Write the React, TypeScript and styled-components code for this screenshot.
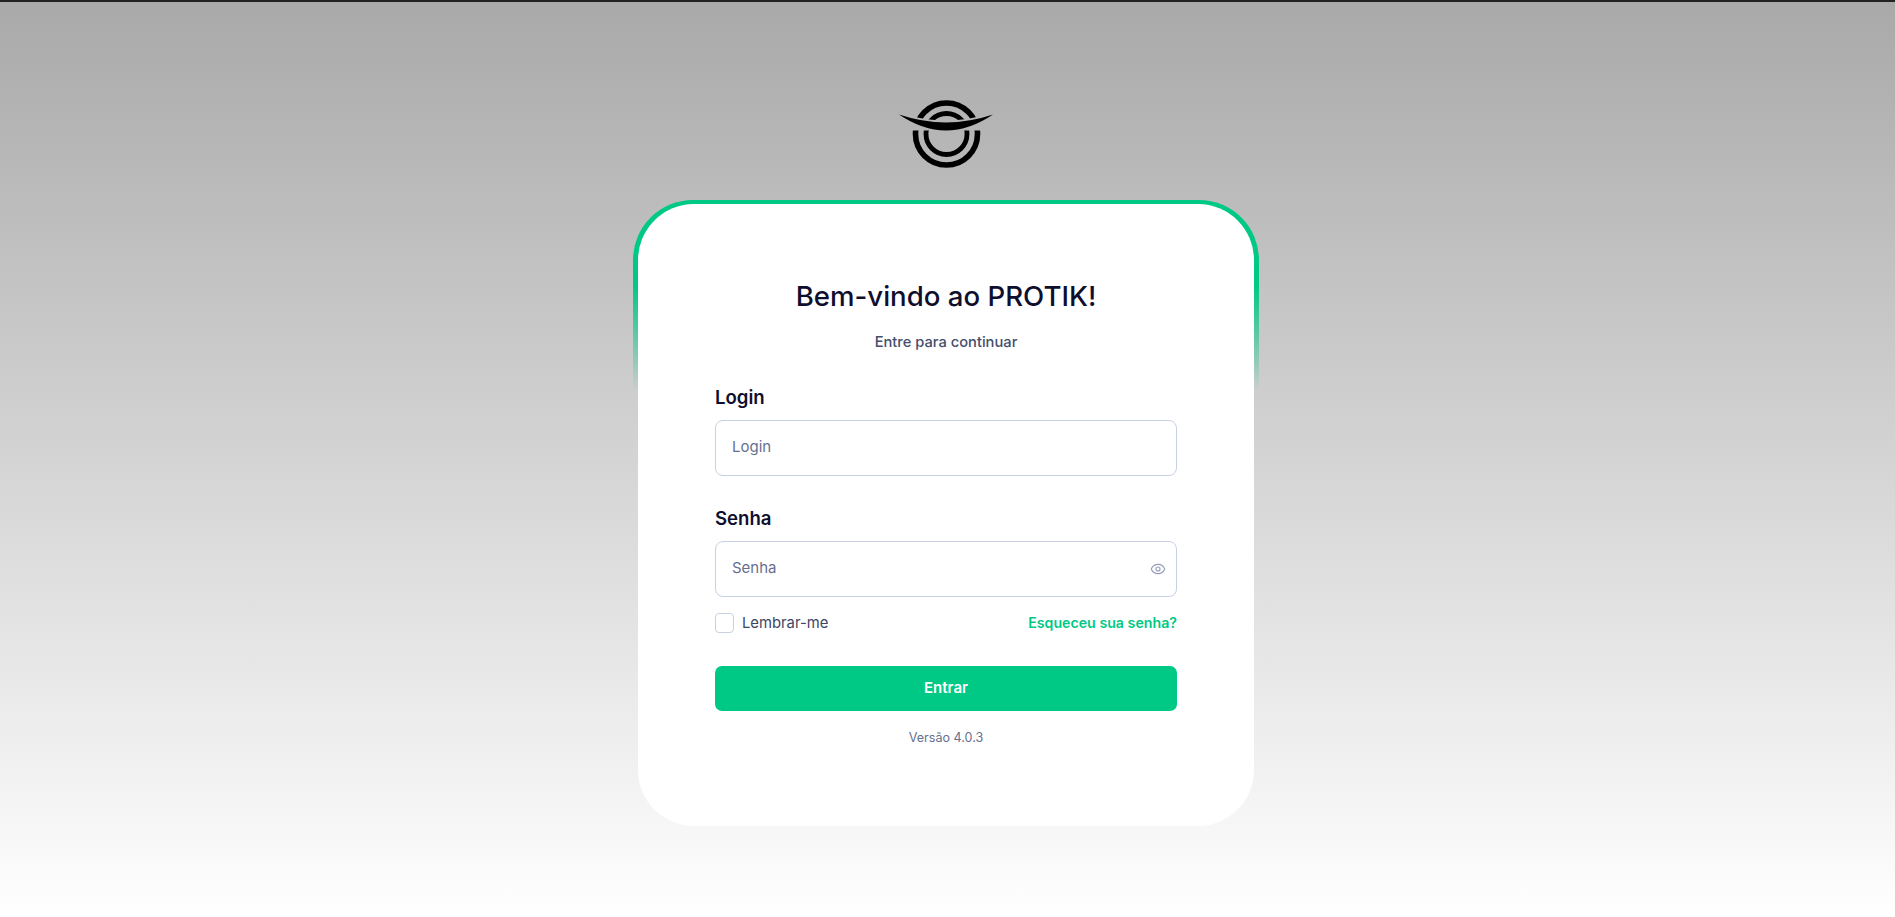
import React from "react";
import styled, { createGlobalStyle } from "styled-components";
import { Eye } from "lucide-react";

const Global = createGlobalStyle`
  html, body { margin: 0; padding: 0; height: 100%; }
  body { font-family: "Inter", "Liberation Sans", sans-serif; }
  * { box-sizing: border-box; }
`;

const Page = styled.main`
  height: 917px;
  overflow: hidden;
  display: flex;
  flex-direction: column;
  align-items: center;
  padding: 98px 3px 0 0;
  border-top: 2px solid #222;
  background: linear-gradient(180deg, #a9a9a9 0%, #ffffff 100%);
`;

const Logo = styled.svg`
  display: block;
  width: 92px;
  height: 68px;
  flex: none;
  overflow: visible;
`;

const CardFrame = styled.div`
  position: relative;
  margin-top: 32px;
  padding: 4px 5px 0;
  width: 626px;
  &::before {
    content: "";
    position: absolute;
    top: 0;
    left: 0;
    right: 0;
    height: 190px;
    border-radius: 60px 60px 0 0;
    background: linear-gradient(180deg, #00c985 0%, #00c985 45%, rgba(0, 201, 133, 0) 100%);
  }
`;

const Card = styled.section`
  position: relative;
  width: 616px;
  height: 622px;
  background: #fff;
  border-radius: 56px;
  padding: 75px 77px 0;
  display: flex;
  flex-direction: column;
`;

const Title = styled.h1`
  margin: 0;
  text-align: center;
  font-size: 27.6px;
  line-height: 34px;
  font-weight: 500;
  color: #0f0f2d;
`;

const Subtitle = styled.p`
  margin: 19px 0 0;
  text-align: center;
  font-size: 14.7px;
  line-height: 20px;
  font-weight: 500;
  color: #454e6c;
`;

const Field = styled.div<{ $top: number }>`
  margin-top: ${(p) => p.$top}px;
  display: flex;
  flex-direction: column;
  gap: 11px;
`;

const Label = styled.label`
  font-size: 18.6px;
  line-height: 24px;
  font-weight: 600;
  color: #0f0f2d;
`;

const InputBox = styled.div`
  position: relative;
  height: 56px;
`;

const Input = styled.input`
  width: 100%;
  height: 100%;
  border: 1px solid #c9d0e3;
  border-radius: 8px;
  padding: 0 16px 3px;
  background: #fff;
  font: 400 15px "Inter", "Liberation Sans", sans-serif;
  color: #0f0f2d;
  outline: none;
  &::placeholder { color: #667091; opacity: 1; }
`;

const EyeButton = styled.span`
  position: absolute;
  top: 50%;
  right: 11px;
  transform: translateY(-50%);
  display: flex;
  color: #949db8;
`;

const OptionsRow = styled.div`
  margin-top: 16px;
  display: flex;
  align-items: center;
  justify-content: space-between;
  height: 20px;
`;

const Remember = styled.label`
  display: flex;
  align-items: center;
  gap: 8px;
  font-size: 14.8px;
  line-height: 20px;
  font-weight: 400;
  color: #3d4664;
`;

const CheckBox = styled.span`
  width: 19px;
  height: 20px;
  border: 1px solid #c9d0e3;
  border-radius: 4px;
  background: #fff;
`;

const ForgotLink = styled.a`
  font-size: 14.2px;
  line-height: 20px;
  font-weight: 600;
  color: #00c985;
  text-decoration: none;
`;

const Submit = styled.button`
  margin-top: 33px;
  height: 45px;
  width: 100%;
  padding: 0 0 2px;
  border: 0;
  border-radius: 7px;
  background: #00c985;
  color: #fff;
  font: 600 15px "Inter", "Liberation Sans", sans-serif;
`;

const Version = styled.p`
  margin: 17px 0 0;
  text-align: center;
  font-size: 12.6px;
  line-height: 20px;
  color: #667091;
`;

export default function App() {
  return (
    <Page>
      <Global />
      <Logo viewBox="0 0 92 68" aria-label="PROTIK">
        <defs>
          <clipPath id="logo-top">
            <path d="M0 0H92V13Q46 28 0 13Z" />
          </clipPath>
          <clipPath id="logo-bottom">
            <rect x="0" y="30.5" width="92" height="38" />
          </clipPath>
        </defs>
        <g fill="none" stroke="#000">
          <g clipPath="url(#logo-top)">
            <circle cx="46.5" cy="34" r="31" strokeWidth="5.6" />
            <circle cx="46.5" cy="34" r="20.5" strokeWidth="4.8" />
          </g>
          <g clipPath="url(#logo-bottom)">
            <circle cx="46.5" cy="34" r="31" strokeWidth="5.6" />
            <circle cx="46.5" cy="34" r="20.5" strokeWidth="4.8" />
          </g>
        </g>
        <path d="M-1 14.5Q46 30.4 93 14.5Q46 46.4 -1 14.5Z" fill="#000" />
      </Logo>
      <CardFrame>
        <Card>
          <Title>Bem-vindo ao PROTIK!</Title>
          <Subtitle>Entre para continuar</Subtitle>
          <Field $top={33}>
            <Label>Login</Label>
            <InputBox>
              <Input placeholder="Login" />
            </InputBox>
          </Field>
          <Field $top={30}>
            <Label>Senha</Label>
            <InputBox>
              <Input placeholder="Senha" />
              <EyeButton>
                <Eye size={16} strokeWidth={1.7} />
              </EyeButton>
            </InputBox>
          </Field>
          <OptionsRow>
            <Remember>
              <CheckBox />
              Lembrar-me
            </Remember>
            <ForgotLink href="#">Esqueceu sua senha?</ForgotLink>
          </OptionsRow>
          <Submit>Entrar</Submit>
          <Version>Versão 4.0.3</Version>
        </Card>
      </CardFrame>
    </Page>
  );
}
